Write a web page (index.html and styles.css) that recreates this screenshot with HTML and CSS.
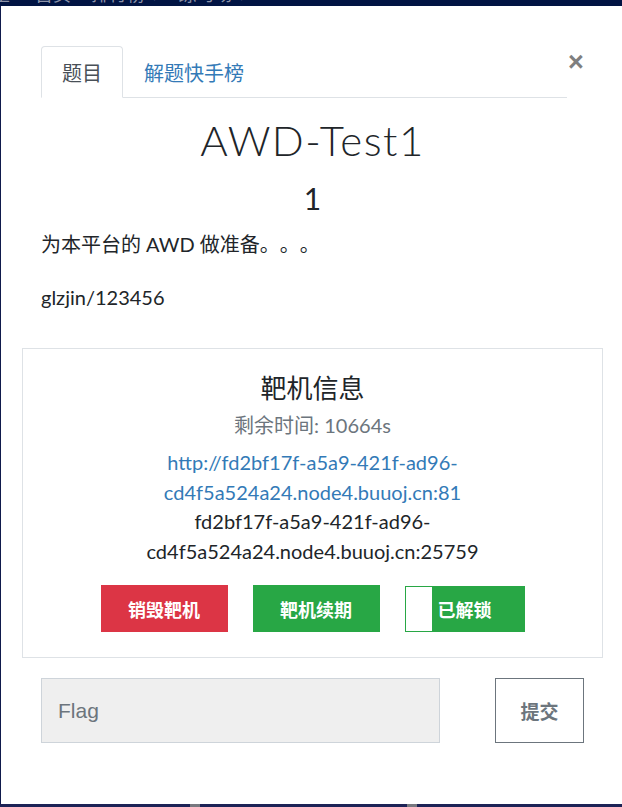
FILE: index.html
```html
<!DOCTYPE html>
<html lang="zh-CN">
<head>
    <meta charset="UTF-8">
    <title>AWD-Test1</title>
    <meta name="viewport" content="width=device-width, initial-scale=1.0">
    <link rel="stylesheet" href="styles.css">
</head>
<body>
    <div class="nav-peek">
        <div class="nav-items">
            <span class="nav-cut">生</span>
            <span>首页</span>
            <span>排行榜 ▾</span>
            <span>练习场 ▾</span>
        </div>
    </div>

    <div class="modal">
        <div class="modal-head">
            <ul class="tabs">
                <li class="active"><a href="#">题目</a></li>
                <li><a href="#">解题快手榜</a></li>
            </ul>
            <button class="close" type="button">&times;</button>
        </div>

        <h3 class="chal-name">AWD-Test1</h3>
        <h4 class="chal-value">1</h4>

        <div class="chal-desc">
            <p>为本平台的 AWD 做准备。。。</p>
            <p>glzjin/123456</p>
        </div>

        <div class="target-box">
            <h4 class="target-title">靶机信息</h4>
            <div class="target-time">剩余时间: 10664s</div>
            <div class="target-info">
                <a href="#" class="target-link">http://fd2bf17f-a5a9-421f-ad96-cd4f5a524a24.node4.buuoj.cn:81</a>
                <div class="target-host">fd2bf17f-a5a9-421f-ad96-cd4f5a524a24.node4.buuoj.cn:25759</div>
            </div>
            <div class="target-actions">
                <button class="btn btn-red" type="button">销毁靶机</button>
                <button class="btn btn-green" type="button">靶机续期</button>
                <button class="btn btn-unlocked" type="button">已解锁</button>
            </div>
        </div>

        <form class="flag-row" action="#" method="POST">
            <input type="text" class="flag-input" name="flag" placeholder="Flag">
            <button type="submit" class="flag-submit">提交</button>
        </form>
    </div>

    <div class="foot-peek">
        <span class="foot-mark"></span>
        <span class="foot-mark"></span>
    </div>
</body>
</html>
```

FILE: styles.css
```css
body {
    margin: 0;
    background: #0f1a4c;
    font-family: Lato, "Noto Sans CJK SC", sans-serif;
    color: #212529;
    text-spacing-trim: space-all;
}
.nav-peek {
    height: 6px;
    overflow: hidden;
    background: #011443;
}
.nav-items {
    display: flex;
    margin-top: -18px;
    font-size: 18px;
    line-height: 24px;
    color: #8d93a8;
}
.nav-items span {
    margin-right: 20px;
}
.nav-items .nav-cut {
    margin-left: -8px;
    margin-right: 25px;
}
.modal {
    margin-left: 1px;
    width: 621px;
    height: 798px;
    box-sizing: border-box;
    padding: 40px 0 0 21px;
    background: #fff;
}
.modal-head {
    display: flex;
    margin-left: 19px;
    width: 542px;
}
.tabs {
    display: flex;
    flex: 1;
    margin: 0;
    padding: 0;
    list-style: none;
    border-bottom: 1px solid #dee2e6;
}
.tabs li {
    margin-bottom: -1px;
}
.tabs a {
    display: block;
    padding: 11px 20px 9px;
    font-size: 20px;
    line-height: 30px;
    color: #337ab7;
    text-decoration: none;
    border: 1px solid transparent;
    border-radius: 4px 4px 0 0;
}
.tabs .active a {
    color: #495057;
    border-color: #dee2e6 #dee2e6 #fff;
}
.close {
    width: 15px;
    padding: 0;
    margin: 4px 0 0 1px;
    align-self: flex-start;
    border: none;
    background: none;
    font-family: "Liberation Sans", sans-serif;
    font-size: 27px;
    font-weight: bold;
    line-height: 24px;
    color: #7f7f7f;
    cursor: pointer;
}
.chal-name {
    margin: 17px 0 0;
    width: 581px;
    text-align: center;
    font-size: 42px;
    font-weight: 300;
    letter-spacing: 1.5px;
    line-height: 50px;
}
.chal-value {
    margin: 15px 0 0;
    width: 581px;
    text-align: center;
    font-size: 30px;
    font-weight: 400;
    line-height: 36px;
}
.chal-desc {
    margin: 13px 0 0 19px;
    font-size: 20px;
    line-height: 30px;
}
.chal-desc p {
    margin: 0 0 23px;
}
.target-box {
    margin-top: 36px;
    width: 581px;
    box-sizing: border-box;
    padding: 24px 0 25px;
    border: 1px solid #dee2e6;
    text-align: center;
}
.target-title {
    margin: 0;
    font-size: 26px;
    font-weight: 400;
    line-height: 31px;
}
.target-time {
    margin-top: 6px;
    font-size: 20px;
    line-height: 30px;
    color: #6c757d;
}
.target-info {
    max-width: 440px;
    margin: 7px auto 0;
    font-size: 20px;
    line-height: 30px;
}
.target-link {
    color: #337ab7;
    text-decoration: none;
}
.target-host {
    line-height: 29.5px;
}
.target-actions {
    display: flex;
    justify-content: center;
    align-items: flex-end;
    gap: 25px;
    margin-top: 19px;
}
.btn {
    height: 47px;
    width: 127px;
    border: none;
    font-family: "Noto Sans CJK SC", sans-serif;
    font-size: 18px;
    font-weight: bold;
    color: #fff;
    cursor: pointer;
}
.btn-red {
    background: #dc3545;
}
.btn-green {
    background: #28a745;
}
.btn-unlocked {
    width: 120px;
    height: 46px;
    border: 1px solid #28a745;
    background: linear-gradient(to right, #fff 26px, #28a745 26px);
}
.flag-row {
    display: flex;
    margin: 20px 0 0 19px;
    width: 543px;
}
.flag-input {
    width: 399px;
    height: 65px;
    box-sizing: border-box;
    padding: 0 16px;
    border: 1px solid #ced4da;
    background: #efefef;
    font-family: "Liberation Sans", sans-serif;
    font-size: 21px;
    color: #495057;
}
.flag-input::placeholder {
    color: #6c757d;
}
.flag-submit {
    margin-left: auto;
    width: 89px;
    height: 65px;
    border: 1px solid #6c757d;
    background: #fff;
    font-family: "Noto Sans CJK SC", sans-serif;
    font-size: 19px;
    font-weight: bold;
    color: #6c757d;
    cursor: pointer;
}
.foot-peek {
    display: flex;
    height: 3px;
    background: #1d2356;
}
.foot-mark {
    width: 10px;
    height: 3px;
    background: #77787f;
    margin-left: 190px;
}
.foot-mark + .foot-mark {
    margin-left: 207px;
}
```
